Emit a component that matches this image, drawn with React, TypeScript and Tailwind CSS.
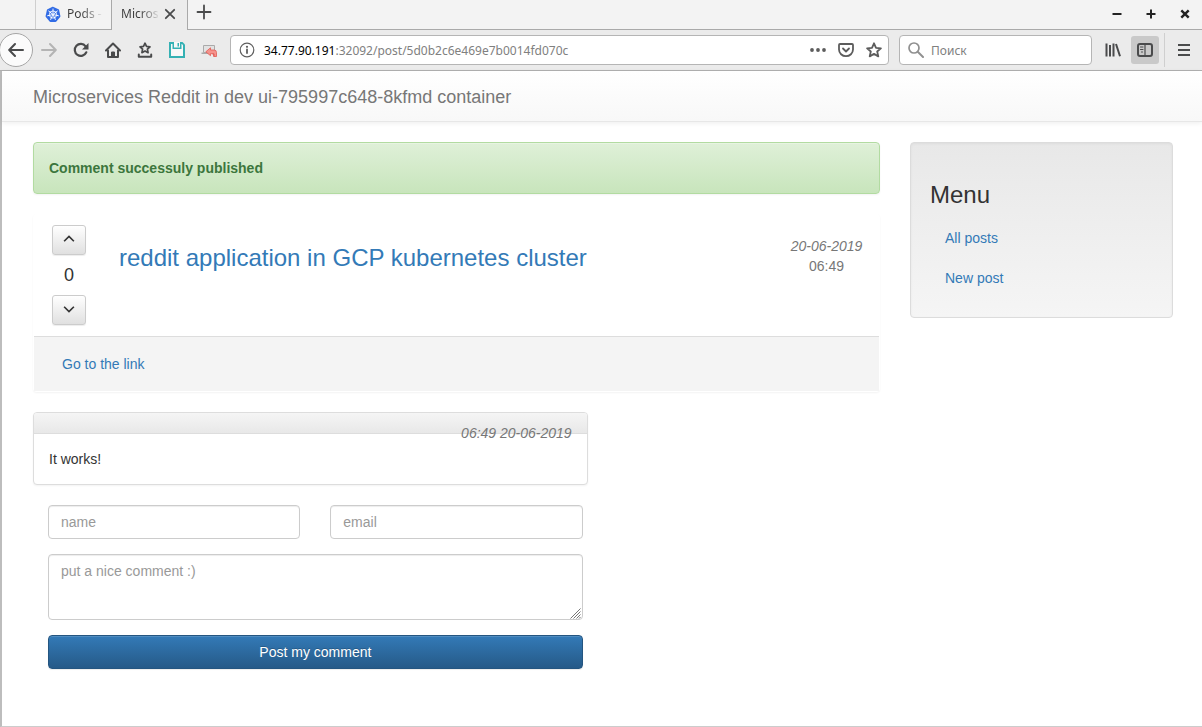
import React from "react";

const spokes = [0, 1, 2, 3, 4, 5, 6].map((i) => (i * 360) / 7);

function KubernetesIcon() {
  return (
    <svg width="16" height="16" viewBox="0 0 32 32" className="shrink-0" aria-hidden="true">
      <path
        d="M16 1.4 27 6.6a2.4 2.4 0 0 1 1.2 1.6l2.6 11.6a2.4 2.4 0 0 1-.5 2l-7.500 9.300a2.400 2.400 0 0 1-1.800.9H11a2.400 2.400 0 0 1-1.800-.9L1.700 21.800a2.400 2.400 0 0 1-.5-2L3.800 8.200A2.400 2.400 0 0 1 5 6.600L15 1.700a2.400 2.400 0 0 1 1-.3z"
        fill="#326ce5"
      />
      <g stroke="#fff" strokeWidth="1.8" fill="none">
        <circle cx="16" cy="17" r="7.200" />
        {spokes.map((a) => (
          <path key={a} d="M16 15V6" strokeLinecap="round" transform={`rotate(${a} 16 17)`} />
        ))}
      </g>
      <circle cx="16" cy="17" r="1.800" fill="#fff" />
    </svg>
  );
}

type IconProps = { children: React.ReactNode; className?: string; size?: number };

function Icon({ children, className = "text-[#4a4b4c]", size = 16 }: IconProps) {
  return (
    <svg
      width={size}
      height={size}
      viewBox="0 0 16 16"
      fill="none"
      stroke="currentColor"
      strokeWidth="2"
      strokeLinecap="round"
      strokeLinejoin="round"
      className={`shrink-0 ${className}`}
      aria-hidden="true"
    >
      {children}
    </svg>
  );
}

function TabStrip() {
  return (
    <div className="flex h-[30px] items-stretch border-b border-[#a9a9a9] bg-[#f3f3f3] text-[12px] text-[#3c3c3c]">
      <div className="w-[35px]" />
      <button className="flex w-[76px] items-center gap-[6px] border-l border-[#cfcfcf] pb-px pl-[9px]">
        <KubernetesIcon />
        <span className="bg-linear-to-r from-[#3c3c3c] from-40% to-[#e8e8e8] bg-clip-text whitespace-nowrap text-transparent">
          Pods -
        </span>
      </button>
      <div className="-mb-px flex w-[77px] items-center border-x border-[#a9a9a9] bg-[#ececec] pb-[2px] pl-[9px]">
        <button className="w-[38px] bg-linear-to-r from-[#3c3c3c] from-50% to-[#e0e0e0] bg-clip-text text-left whitespace-nowrap text-transparent">
          Micros
        </button>
        <button aria-label="Close tab" className="ml-[3px]">
          <Icon>
            <path d="M3.800 3.800l8.400 8.400M12.200 3.800l-8.400 8.400" strokeWidth="1.800" />
          </Icon>
        </button>
      </div>
      <button aria-label="New tab" className="ml-[8px] pb-[5px]">
        <Icon>
          <path d="M8 1.500v13M1.500 8h13" strokeWidth="1.800" />
        </Icon>
      </button>
      <div className="ml-auto flex items-center gap-[18px] pr-[9px] pb-px">
        <button aria-label="Minimize">
          <Icon className="text-[#222]">
            <path d="M3.500 8h9" strokeLinecap="butt" />
          </Icon>
        </button>
        <button aria-label="Maximize">
          <Icon className="text-[#222]">
            <path d="M8 3.500v9M3.500 8h9" strokeLinecap="butt" />
          </Icon>
        </button>
        <button aria-label="Close window">
          <Icon className="text-[#222]">
            <path d="M4.300 4.300l7.400 7.400M11.700 4.300l-7.400 7.400" strokeWidth="2.400" strokeLinecap="butt" />
          </Icon>
        </button>
      </div>
    </div>
  );
}

function Toolbar() {
  return (
    <div className="flex h-[41px] items-center border-b border-[#b1b1b1] bg-[#ebebeb]">
      <button
        aria-label="Back"
        className="-ml-px flex h-[34px] w-[34px] shrink-0 items-center justify-center rounded-full border border-[#a6a6a6] bg-[#fbfbfb]"
      >
        <Icon>
          <path d="M15 8H1.500M7 2 1.200 8 7 14" />
        </Icon>
      </button>
      <div className="ml-[8px] flex shrink-0 items-center gap-[16px]">
        <button aria-label="Forward">
          <Icon className="text-[#b4b4b4]">
            <path d="M1 8h13.500M9 2l5.800 6L9 14" />
          </Icon>
        </button>
        <button aria-label="Reload">
          <Icon>
            <path d="M13.300 10.300A6 6 0 1 1 12.600 4.300" strokeWidth="2.200" />
            <path d="M15.500 1v6.500H9z" fill="currentColor" stroke="none" />
          </Icon>
        </button>
        <button aria-label="Home">
          <Icon>
            <path d="M1 8.500 8 1.500l7 7M3 8.500V15h10V8.500" />
            <path d="M6.500 14.500V10h3v4.500z" fill="currentColor" strokeWidth="1" />
          </Icon>
        </button>
        <button aria-label="Bookmarks">
          <Icon>
            <path
              d="M8 1.200l1.500 3.200 3.500.4-2.600 2.400.7 3.500L8 9 4.900 10.700l.7-3.500L3 4.800l3.500-.4z"
              strokeWidth="1.700"
            />
            <path d="M1.800 12.500v2.300h12.400v-2.300" />
          </Icon>
        </button>
        <button aria-label="Save">
          <svg width="16" height="16" viewBox="0 0 16 16" aria-hidden="true" className="shrink-0">
            <path d="M0 0h13.500L16 2.500V16H0z" fill="#35b1b4" />
            <path d="M2 2h1.500v5h9V2h.5l1 1.300V14H2z" fill="#f8f8f8" />
            <path d="M5 0h6v5.500H5z" fill="#f8f8f8" />
            <path d="M8.500 1h1.500v3.500H8.500z" fill="#35b1b4" />
          </svg>
        </button>
        <button aria-label="Remote session">
          <svg width="16" height="16" viewBox="0 0 16 16" aria-hidden="true" className="shrink-0">
            <path d="M2.500 3.500h11v7h-11z" fill="#e2e2e2" stroke="#aaa" />
            <path d="M.5 10.500h9v1.500H.5z" fill="#aaa" />
            <path
              d="M4.800 9.800l4.700-4v2.200h3.700q2.300 0 2.300 2.500v4h-2.700v-2.800H9.500v2z"
              fill="#f5938c"
              stroke="#e25a54"
              strokeWidth=".8"
            />
            <path d="M11.500 12h1.300v2.500" fill="none" stroke="#e25a54" />
          </svg>
        </button>
      </div>
      <div className="ml-[13px] flex h-[30px] min-w-0 flex-1 items-center rounded-[4px] border border-[#b5b5b5] bg-white px-[6px]">
        <Icon className="mx-[2px] text-[#5f5f5f]">
          <circle cx="8" cy="8" r="6.800" strokeWidth="1.200" />
          <path d="M8 7.500V11" strokeWidth="1.800" />
          <circle cx="8" cy="4.800" r="1.100" fill="currentColor" stroke="none" />
        </Icon>
        <p className="ml-[7px] min-w-0 flex-1 truncate pt-px text-[12px] leading-[18px] text-[#808080]">
          <span className="text-black">34.77.90.191</span>:32092/post/5d0b2c6e469e7b0014fd070c
        </p>
        <div className="flex items-center gap-[12px]">
          <button aria-label="Page actions">
            <Icon className="text-[#5c5c5c]">
              <g fill="currentColor" stroke="none">
                <circle cx="2" cy="8" r="1.900" />
                <circle cx="8" cy="8" r="1.900" />
                <circle cx="14" cy="8" r="1.900" />
              </g>
            </Icon>
          </button>
          <button aria-label="Save to Pocket">
            <Icon className="text-[#5c5c5c]">
              <path d="M2 2h12q1 0 1 1v4.500a7 6.700 0 0 1-14 0V3q0-1 1-1z" strokeWidth="1.800" />
              <path d="M5 6.500 8 9.500l3-3" strokeWidth="1.800" />
            </Icon>
          </button>
          <button aria-label="Bookmark this page">
            <Icon className="text-[#5c5c5c]">
              <path
                d="M8 1.300l2 4.500 4.900.5-3.700 3.200 1.100 4.900L8 11.900l-4.300 2.500 1.100-4.900L1.100 6.300 6 5.800z"
                strokeWidth="1.800"
              />
            </Icon>
          </button>
        </div>
      </div>
      <label className="ml-[10px] flex h-[30px] w-[193px] shrink-0 items-center rounded-[4px] border border-[#b5b5b5] bg-white px-[8px]">
        <Icon className="text-[#909090]">
          <circle cx="6" cy="6" r="5" strokeWidth="1.700" />
          <path d="M10 10l5 5" />
        </Icon>
        <input
          aria-label="Поиск"
          placeholder="Поиск"
          className="ml-[7px] min-w-0 flex-1 pt-px text-[12px] leading-[18px] outline-none placeholder:text-[#808080]"
        />
      </label>
      <button aria-label="Library" className="ml-[13px]">
        <Icon>
          <path d="M1.500 1.500v13M5 3v11.500M8.500 1.500v13M11 2l4 12.300" strokeLinecap="butt" />
        </Icon>
      </button>
      <button
        aria-label="Sidebars"
        className="ml-[10px] flex h-[28px] w-[28px] items-center justify-center rounded-[3px] bg-[#c9c9c9]"
      >
        <Icon>
          <rect x="1" y="2" width="14" height="12" rx="2" />
          <path d="M8 2v12" strokeWidth="1.200" />
          <path d="M3.500 5h2.500M3.500 7.500h2.500M4.500 10h1" strokeWidth="1" />
        </Icon>
      </button>
      <div className="mx-[5px] h-[34px] w-px bg-[#cfcfcf]" />
      <button aria-label="Menu" className="mr-[10px] ml-[6px]">
        <Icon>
          <path d="M2 3h12M2 8h12M2 13h12" strokeLinecap="butt" />
        </Icon>
      </button>
    </div>
  );
}

const inputClass =
  "w-full rounded-[4px] border border-[#ccc] bg-white px-[12px] py-[6px] text-[14px] leading-[20px] text-[#555] shadow-[inset_0_1px_1px_rgba(0,0,0,0.075)] outline-none placeholder:text-[#999]";

function VoteButton({ label, d }: { label: string; d: string }) {
  return (
    <button
      aria-label={label}
      className="flex h-[30px] w-[34px] items-center justify-center rounded-[3px] border border-[#ccc] bg-linear-to-b from-white to-[#e0e0e0] pb-[3px] shadow-[0_1px_1px_rgba(0,0,0,0.075)]"
    >
      <Icon className="text-[#333]" size={12}>
        <path d={d} strokeLinecap="butt" strokeLinejoin="miter" strokeWidth="2.200" />
      </Icon>
    </button>
  );
}

function Post() {
  return (
    <article className="mt-[20px] rounded-[4px] border border-transparent shadow-[0_1px_2px_rgba(0,0,0,0.05)]">
      <div className="flex pt-[10px] pr-[15px] pb-[11px] pl-[18px]">
        <div className="flex flex-col items-center">
          <VoteButton label="Upvote" d="M1.500 11 8 4.500l6.500 6.500" />
          <span className="my-[10px] text-[18px] leading-[20px]">0</span>
          <VoteButton label="Downvote" d="M1.500 5 8 11.500 14.500 5" />
        </div>
        <h3 className="mt-[20px] ml-[33px] flex-1 text-[24px] leading-[26px]">
          <a href="#post" className="text-[#337ab7]">
            reddit application in GCP kubernetes cluster
          </a>
        </h3>
        <time className="mt-[11px] flex w-[75px] flex-col text-center text-[14px] leading-[20px] text-[#777]">
          <i>20-06-2019</i>
          <span>06:49</span>
        </time>
      </div>
      <div className="border-t border-[#ddd] bg-[#f4f4f4] px-[28px] py-[17px] text-[14px] leading-[20px]">
        <a href="#link" className="text-[#337ab7]">
          Go to the link
        </a>
      </div>
    </article>
  );
}

function Comments() {
  return (
    <div className="mt-[20px] grid grid-cols-12 gap-x-[30px]">
      <div className="col-span-8">
        <article className="rounded-[4px] border border-[#ddd] bg-white shadow-[0_1px_2px_rgba(0,0,0,0.05)]">
          <header className="flex h-[21px] justify-end rounded-t-[3px] border-b border-[#ddd] bg-linear-to-b from-[#f5f5f5] to-[#e8e8e8] px-[15px] pt-[10px]">
            <time className="text-[14px] leading-[20px] whitespace-nowrap text-[#777] italic">06:49 20-06-2019</time>
          </header>
          <p className="p-[15px] text-[14px] leading-[20px]">It works!</p>
        </article>
        <form className="mt-[20px] mr-[5px] ml-[15px] flex flex-col gap-[15px]" onSubmit={(e) => e.preventDefault()}>
          <div className="grid grid-cols-2 gap-[30px]">
            <input aria-label="name" placeholder="name" className={inputClass} />
            <input aria-label="email" type="email" placeholder="email" className={inputClass} />
          </div>
          <div className="relative flex">
            <textarea
              aria-label="comment"
              placeholder="put a nice comment :)"
              className={`h-[66px] resize-none ${inputClass}`}
            />
            <svg
              width="11"
              height="11"
              viewBox="0 0 11 11"
              className="pointer-events-none absolute right-[2px] bottom-[1px]"
              aria-hidden="true"
            >
              <path d="M.5 10.500l10-10M3.500 10.500l7-7M6.500 10.500l4-4M9 10.500l1.500-1.500" stroke="#777" fill="none" />
            </svg>
          </div>
          <button
            type="submit"
            className="h-[34px] rounded-[4px] border border-[#245580] bg-linear-to-b from-[#337ab7] to-[#265a88] text-[14px] leading-[20px] text-white shadow-[inset_0_1px_0_rgba(255,255,255,0.15),0_1px_1px_rgba(0,0,0,0.075)] [text-shadow:0_-1px_0_rgba(0,0,0,0.2)]"
          >
            Post my comment
          </button>
        </form>
      </div>
    </div>
  );
}

export default function App() {
  return (
    <div className="flex min-h-screen flex-col bg-white">
      <div className="font-['Noto_Sans',sans-serif]">
        <TabStrip />
        <Toolbar />
      </div>
      <div className="flex flex-1 flex-col border-b border-l-2 border-b-[#ccc] border-l-[#bdbdbd] font-['Liberation_Sans',Arial,sans-serif] text-[#333]">
        <nav className="flex h-[51px] items-center border-b border-[#e7e7e7] bg-linear-to-b from-white to-[#f8f8f8] px-[31px] pt-[2px] shadow-[0_1px_5px_rgba(0,0,0,0.075)]">
          <a href="#home" className="text-[18px] leading-[20px] text-[#777]">
            Microservices Reddit in dev ui-795997c648-8kfmd container
          </a>
        </nav>
        <div className="grid grid-cols-[minmax(0,1fr)_263px] items-start gap-x-[30px] pt-[20px] pr-[29px] pb-[20px] pl-[31px]">
          <main>
            <div
              role="alert"
              className="rounded-[4px] border border-[#b2dba1] bg-linear-to-b from-[#dff0d8] to-[#c8e5bc] p-[15px] text-[14px] leading-[20px] font-bold text-[#3c763d] shadow-[inset_0_1px_0_rgba(255,255,255,0.25),0_1px_2px_rgba(0,0,0,0.05)]"
            >
              Comment successuly published
            </div>
            <Post />
            <Comments />
          </main>
          <aside className="rounded-[4px] border border-[#dcdcdc] bg-linear-to-b from-[#e8e8e8] to-[#f5f5f5] p-[19px] shadow-[inset_0_1px_3px_rgba(0,0,0,0.05),0_1px_0_rgba(255,255,255,0.1)]">
            <h3 className="mt-[20px] mb-[10px] text-[24px] leading-[26px]">Menu</h3>
            <nav className="flex flex-col text-[14px] leading-[20px] text-[#337ab7]">
              <a href="#posts" className="px-[15px] py-[10px]">
                All posts
              </a>
              <a href="#new" className="px-[15px] py-[10px]">
                New post
              </a>
            </nav>
          </aside>
        </div>
      </div>
    </div>
  );
}
